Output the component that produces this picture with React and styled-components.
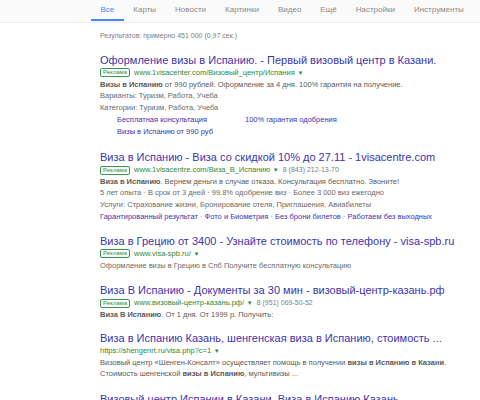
import React from 'react'
import styled, { createGlobalStyle } from 'styled-components'

const Global = createGlobalStyle`
  body {
    margin: 0;
    background: #fff;
    font-family: "Liberation Sans", Arial, sans-serif;
  }
`

const Page = styled.div`
  width: 480px;
  height: 400px;
  overflow: hidden;
`

const Nav = styled.div`
  height: 22px;
  background: #fafafa;
  border-bottom: 1px solid #ececec;
  display: flex;
  padding-left: 91px;
`

const Tab = styled.div`
  padding: 0 9.5px;
  font-size: 8px;
  line-height: 19px;
  color: ${(p) => (p.active ? '#4285f4' : '#8a8a8a')};
  border-bottom: 2px solid ${(p) => (p.active ? '#4285f4' : 'transparent')};
  height: 19px;
`

const Content = styled.div`
  padding-left: 100px;
`

const Stats = styled.div`
  font-size: 7px;
  color: #808080;
  line-height: 11px;
  margin-top: 7px;
  margin-bottom: 13px;
`

const Result = styled.div`
  margin-bottom: ${(p) => (p.tight ? '12px' : '13px')};
`

const Title = styled.div`
  font-size: 11px;
  line-height: 13px;
  color: #3b35ad;
  white-space: nowrap;
`

const UrlLine = styled.div`
  display: flex;
  align-items: center;
  gap: 4px;
  font-size: 7.5px;
  line-height: 11.5px;
  height: 11.5px;
  color: #2a8a3c;
  white-space: nowrap;
`

const Badge = styled.span`
  border: 1px solid #3a9a4a;
  border-radius: 2px;
  padding: 0 2px;
  font-size: 6px;
  line-height: 7px;
  color: #2a8a3c;
`

const Arrow = styled.span`
  font-size: 6px;
  color: #2a8a3c;
  margin-left: 1px;
`

const Phone = styled.span`
  color: #808080;
  margin-left: 4px;
  font-size: 7px;
`

const Line = styled.div`
  font-size: 7.5px;
  line-height: 11.6px;
  color: ${(p) => (p.dark ? '#5a5a5a' : '#6a6a6a')};
  white-space: nowrap;
  b {
    color: #5a5a5a;
  }
`

const LinkLine = styled(Line)`
  color: #888;
  a {
    color: #3b35ad;
    text-decoration: none;
  }
`

const Sitelinks = styled.div`
  display: grid;
  grid-template-columns: 128px auto;
  padding-left: 17px;
  margin-top: 1px;
  font-size: 7.5px;
  line-height: 12px;
  color: #3b35ad;
`

const tabs = ['Все', 'Карты', 'Новости', 'Картинки', 'Видео', 'Ещё', 'Настройки', 'Инструменты']

const Url = ({ children, ad, phone }) => (
  <UrlLine>
    {ad && <Badge>Реклама</Badge>}
    <span>
      {children}
      <Arrow> ▼</Arrow>
      {phone && <Phone>{phone}</Phone>}
    </span>
  </UrlLine>
)

const App = () => {
  return (
    <Page>
      <Global />
      <Nav>
        {tabs.map((t, i) => (
          <Tab key={t} active={i === 0}>{t}</Tab>
        ))}
      </Nav>
      <Content>
        <Stats>Результатов: примерно 451 000 (0,97 сек.)</Stats>

        <Result>
          <Title>Оформление визы в Испанию. - Первый визовый центр в Казани.</Title>
          <Url ad>www.1visacenter.com/Визовый_центр/Испания</Url>
          <Line dark><b>Визы в Испанию</b> от 990 рублей. Оформление за 4 дня. 100% гарантия на получение.</Line>
          <Line>Варианты: Туризм, Работа, Учеба</Line>
          <Line>Категории: Туризм, Работа, Учеба</Line>
          <Sitelinks>
            <span>Бесплатная консультация</span>
            <span>100% гарантия одобрения</span>
            <span>Визы в Испанию от 990 руб</span>
          </Sitelinks>
        </Result>

        <Result>
          <Title>Виза в Испанию - Виза со скидкой 10% до 27.11 - 1visacentre.com</Title>
          <Url ad phone='8 (843) 212-13-70'>www.1visacentre.com/Виза_В_Испанию</Url>
          <Line dark><b>Виза в Испанию</b>. Вернем деньги в случае отказа. Консультация бесплатно. Звоните!</Line>
          <Line>5 лет опыта · В срок от 3 дней · 99.8% одобрение виз · Более 3 000 виз ежегодно</Line>
          <Line>Услуги: Страхование жизни, Бронирование отеля, Приглашения, Авиабилеты</Line>
          <LinkLine>
            <a>Гарантированный результат</a> · <a>Фото и Биометрия</a> · <a>Без брони билетов</a> · <a>Работаем без выходных</a>
          </LinkLine>
        </Result>

        <Result>
          <Title>Виза в Грецию от 3400 - Узнайте стоимость по телефону - visa-spb.ru</Title>
          <Url ad>www.visa-spb.ru/</Url>
          <Line>Оформление визы в Грецию в Спб Получите бесплатную консультацию</Line>
        </Result>

        <Result tight>
          <Title>Виза В Испанию - Документы за 30 мин - визовый-центр-казань.рф</Title>
          <Url ad phone='8 (951) 069-50-52'>www.визовый-центр-казань.рф/</Url>
          <Line dark><b>Виза В Испанию</b>. От 1 дня. От 1999 р. Получить:</Line>
        </Result>

        <Result>
          <Title>Виза в Испанию Казань, шенгенская виза в Испанию, стоимость ...</Title>
          <Url>https://shengenrt.ru/visa.php?c=1</Url>
          <Line dark>Визовый центр «Шенген-Консалт» осуществляет помощь в получении <b>визы в Испанию в Казани</b>.</Line>
          <Line dark>Стоимость шенгенской <b>визы в Испанию</b>, мультивизы ...</Line>
        </Result>

        <Result>
          <Title>Визовый центр Испании в Казани. Виза в Испанию Казань</Title>
        </Result>
      </Content>
    </Page>
  )
}

export default App
